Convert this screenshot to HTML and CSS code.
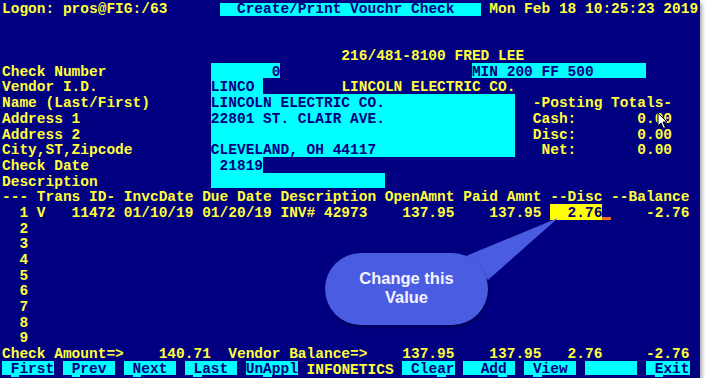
FILE: index.html
```html
<!DOCTYPE html>
<html lang="en">
<head>
    <meta charset="UTF-8">
    <title>Create/Print Vouchr Check</title>
    <link rel="stylesheet" href="styles.css">
</head>
<body>
    <div class="screen">
        <div class="row">Logon: pros@FIG:/63      <span class="fld title">  Create/Print Vouchr Check   </span> Mon Feb 18 10:25:23 2019</div>
        <div class="row"> </div>
        <div class="row"> </div>
        <div class="row">                                       216/481-8100 FRED LEE</div>
        <div class="row">Check Number            <span class="fld">       0</span>                      <span class="fld">MIN 200 FF 500      </span></div>
        <div class="row">Vendor I.D.             <span class="fld">LINCO </span>         LINCOLN ELECTRIC CO.</div>
        <div class="row">Name (Last/First)       <span class="fld">LINCOLN ELECTRIC CO.               </span>  -Posting Totals-</div>
        <div class="row">Address 1               <span class="fld">22801 ST. CLAIR AVE.               </span>  Cash:       0.00</div>
        <div class="row">Address 2               <span class="fld">                                   </span>  Disc:       0.00</div>
        <div class="row">City,ST,Zipcode         <span class="fld">CLEVELAND, OH 44117                </span>   Net:       0.00</div>
        <div class="row">Check Date              <span class="fld"> 21819</span></div>
        <div class="row">Description             <span class="fld">                    </span></div>
        <div class="row">--- Trans ID- InvcDate Due Date Description OpenAmnt Paid Amnt --Disc --Balance</div>
        <div class="row">  1 V   11472 01/10/19 01/20/19 INV# 42973    137.95    137.95 <span class="edit">  2.76</span><span class="cursor"> </span>    -2.76</div>
        <div class="row">  2</div>
        <div class="row">  3</div>
        <div class="row">  4</div>
        <div class="row">  5</div>
        <div class="row">  6</div>
        <div class="row">  7</div>
        <div class="row">  8</div>
        <div class="row">  9</div>
        <div class="row">Check Amount=>    140.71  Vendor Balance=>    137.95    137.95   2.76     -2.76</div>
        <div class="row"><span class="btn"> <span class="key">F</span>irst</span> <span class="btn"> <span class="key">P</span>rev </span> <span class="btn"> <span class="key">N</span>ext </span> <span class="btn"> <span class="key">L</span>ast </span> <span class="btn">Un<span class="key">A</span>ppl</span> INFONETICS <span class="btn"> Cle<span class="key">a</span>r</span> <span class="btn">  Ad<span class="key">d</span> </span> <span class="btn"> <span class="key">V</span>iew </span> <span class="btn">      </span> <span class="btn"> <span class="key">E</span>xit</span></div>

        <!-- callout pointing at the discount field -->
        <svg class="callout-tail" width="100" height="80" viewBox="0 0 100 80">
            <polygon points="0,42 22,66 92,4" fill="#4a5de2"/>
        </svg>
        <div class="callout">Change this<br>Value</div>

        <svg class="mouse" width="12" height="18" viewBox="0 0 12 18">
            <path d="M1 1 L1 14 L4 11 L6.5 16.5 L8.5 15.5 L6 10 L10 10 Z" fill="#fff" stroke="#000" stroke-width="1"/>
        </svg>
    </div>
</body>
</html>
```

FILE: styles.css
```css
body {
    margin: 0;
    background-color: #fff;
}
.screen {
    position: relative;
    width: 700px;
    height: 378px;
    box-sizing: border-box;
    padding-left: 2px;
    background-color: #000080;
    color: #ffff3a;
    font-family: "Liberation Mono", "Courier New", monospace;
    font-weight: bold;
    font-size: 14.5px;
    line-height: 18.7px;
    box-shadow: 2px 3px 4px rgba(0, 0, 0, 0.35);
}
.row {
    height: 15.7px;
    white-space: pre;
}
.fld,
.edit,
.cursor,
.btn,
.key {
    display: inline-block;
    height: 15.7px;
    vertical-align: top;
}
.fld {
    background-color: #00ffff;
    color: #000080;
}
.title {
    height: 13px;
    margin-top: 3px;
    line-height: 12.7px;
}
.edit {
    background-color: #ffff00;
    color: #000080;
}
.cursor {
    box-shadow: inset 0 -3px 0 #f07020;
}
.btn {
    height: 13.5px;
    margin-top: 0.6px;
    line-height: 17.5px;
    background-color: #00ffff;
    color: #000080;
}
.key {
    height: 15.6px;
    background-color: #00ffff;
}
.callout {
    position: absolute;
    left: 325px;
    top: 253px;
    width: 163px;
    height: 72px;
    box-sizing: border-box;
    padding-top: 16px;
    border-radius: 36px;
    background-color: #4a5de2;
    box-shadow: 1px 2px 3px rgba(0, 0, 0, 0.35);
    color: #f4f4ff;
    font-family: "Liberation Sans", Arial, sans-serif;
    font-size: 16.5px;
    line-height: 19px;
    text-align: center;
}
.callout-tail {
    position: absolute;
    left: 466px;
    top: 214px;
}
.mouse {
    position: absolute;
    left: 657px;
    top: 112px;
}
```
